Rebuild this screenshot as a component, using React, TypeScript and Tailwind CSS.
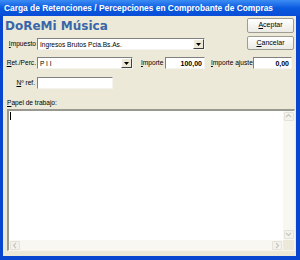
import { ReactNode } from "react";

function Label({ children, className = "" }: { children: ReactNode; className?: string }) {
    return <span className={`text-[6.6px] leading-none text-black whitespace-nowrap ${className}`}>{children}</span>;
}

function Combo({ value, className = "" }: { value: string; className?: string }) {
    return (
        <div className={`flex h-[12px] bg-white border-t border-l border-t-[#808080] border-l-[#808080] border-b border-r border-b-[#f4f3ee] border-r-[#f4f3ee] ${className}`}>
            <span className="flex-1 text-[6.6px] leading-[11px] pl-[2px] text-black whitespace-nowrap overflow-hidden">{value}</span>
            <div className="w-[11px] h-[10px] bg-[#ece9d8] border border-t-white border-l-white border-r-[#404040] border-b-[#404040] flex items-center justify-center">
                <svg width="5" height="3" viewBox="0 0 5 3">
                    <path d="M0 0h5L2.5 3z" fill="#000" />
                </svg>
            </div>
        </div>
    );
}

function Input({ value = "", className = "" }: { value?: string; className?: string }) {
    return (
        <div className={`h-[12px] bg-white border-t border-l border-t-[#808080] border-l-[#808080] border-b border-r border-b-[#f4f3ee] border-r-[#f4f3ee] text-[7px] font-bold leading-[11px] text-right pr-[2px] text-black ${className}`}>
            {value}
        </div>
    );
}

function Button({ first, rest, className = "" }: { first: string; rest: string; className?: string }) {
    return (
        <div className={`w-[47px] flex items-center justify-center rounded-[2px] border border-[#9d9d94] bg-gradient-to-b from-white to-[#ebeae4] text-[7px] text-black ${className}`}>
            <span className="underline">{first}</span>
            {rest}
        </div>
    );
}

function ScrollArrow({ dir }: { dir: "up" | "down" | "left" | "right" }) {
    const paths = {
        up: "M1 4l2.5-2.5L6 4",
        down: "M1 2l2.5 2.5L6 2",
        left: "M4 1L1.5 3.5 4 6",
        right: "M2 1l2.5 2.5L2 6",
    };
    return (
        <div className="w-[10px] h-[9px] rounded-[1px] bg-[#f3f2ec] border border-[#e4e2d8] flex items-center justify-center">
            <svg width="7" height="7" viewBox="0 0 7 7">
                <path d={paths[dir]} fill="none" stroke="#c8c6bc" strokeWidth="1.2" />
            </svg>
        </div>
    );
}

export default function App() {
    return (
        <div className="w-[300px] h-[260px] flex flex-col bg-[#0846cf] font-['Liberation_Sans',Arial,sans-serif]">
            {/* Barra de título */}
            <div className="h-[16px] flex items-center pl-[4px] bg-gradient-to-b from-[#3c8cf4] via-[#0a5ae0] to-[#0a4cd6] text-white text-[8.4px] font-bold whitespace-nowrap">
                Carga de Retenciones / Percepciones en Comprobante de Compras
            </div>

            {/* Cuerpo */}
            <div className="flex-1 ml-[3px] mr-[4px] mb-[4px] bg-[#ece9d8] flex flex-col">
                <div className="flex justify-between items-center mt-[2px] h-[15px]">
                    <span className="ml-[2px] text-[12px] font-bold leading-none text-[#3a66a8] font-['DejaVu_Sans',sans-serif]">DoReMi Música</span>
                    <Button first="A" rest="ceptar" className="h-[15px] mr-[2px]" />
                </div>

                <div className="flex items-end justify-between mt-[3px] h-[14px]">
                    <div className="flex items-center">
                        <Label className="w-[34px] text-right pr-[1px]">
                            <span className="underline">I</span>mpuesto
                        </Label>
                        <Combo value="Ingresos Brutos Pcia.Bs.As." className="w-[168px]" />
                    </div>
                    <Button first="C" rest="ancelar" className="h-[14px] mr-[2px]" />
                </div>

                <div className="flex items-center mt-[7px] h-[12px]">
                    <Label className="w-[34px] text-right pr-[1px]">
                        <span className="underline">R</span>et./Perc.
                    </Label>
                    <Combo value="P I I" className="w-[96px]" />
                    <Label className="ml-[8px] w-[24px]">
                        <span className="underline">I</span>mporte
                    </Label>
                    <Input value="100,00" className="w-[40px]" />
                    <Label className="ml-[6px] w-[42px]">
                        <span className="underline">I</span>mporte ajuste
                    </Label>
                    <Input value="0,00" className="w-[39px]" />
                </div>

                <div className="flex items-center mt-[8px] h-[12px]">
                    <Label className="w-[34px] text-right pr-[2px]">
                        <span className="underline">N</span>º ref.
                    </Label>
                    <Input className="w-[76px]" />
                </div>

                <Label className="mt-[11px] ml-[4px]">
                    <span className="underline">P</span>apel de trabajo:
                </Label>

                {/* Papel de trabajo */}
                <div className="flex-1 mt-[2px] ml-[4px] mr-[1px] mb-[5px] bg-white border-t-2 border-l-2 border-t-[#9a9990] border-l-[#9a9990] border-r border-b border-r-[#f6f5f0] border-b-[#f6f5f0] flex flex-col">
                    <div className="flex-1 flex">
                        <div className="flex-1 pl-[1px] pt-[1px]">
                            <div className="w-px h-[8px] bg-black" />
                        </div>
                        <div className="w-[11px] bg-[#f8f7f2] flex flex-col justify-between py-[1px] items-center">
                            <ScrollArrow dir="up" />
                            <ScrollArrow dir="down" />
                        </div>
                    </div>
                    <div className="h-[10px] flex">
                        <div className="flex-1 bg-[#f8f7f2] flex justify-between items-center px-[1px]">
                            <ScrollArrow dir="left" />
                            <ScrollArrow dir="right" />
                        </div>
                        <div className="w-[11px] bg-[#ece9d8]" />
                    </div>
                </div>
            </div>
        </div>
    );
}
